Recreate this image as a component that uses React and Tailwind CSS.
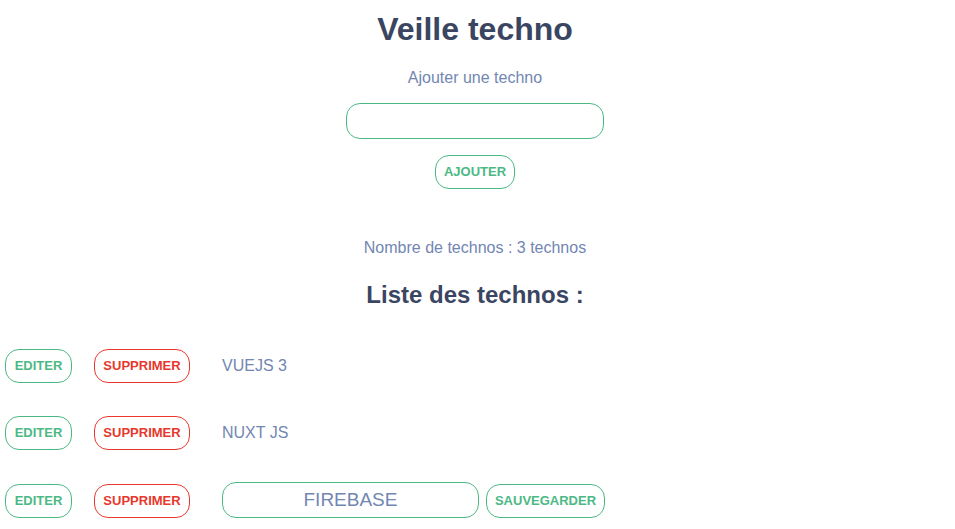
export default function App() {
  const font = { fontFamily: '"Liberation Sans", Arial, sans-serif' };
  const items = ["VUEJS 3", "NUXT JS"];
  const btnG = "h-[34px] rounded-[14px] border border-[#4cb985] text-[#4cb985] text-[13px] font-bold bg-white flex items-center justify-center";
  const btnR = "h-[34px] rounded-[14px] border border-[#e8372c] text-[#e8372c] text-[13px] font-bold bg-white flex items-center justify-center";
  return (
    <div className="w-[955px] h-[529px] bg-white overflow-hidden" style={font}>
      <div className="w-[950px] flex flex-col items-center">
        <h1 className="mt-[11px] text-[32px] leading-[37px] font-bold text-[#3a4562]">Veille techno</h1>
        <div className="mt-[21px] text-[16px] leading-[18px] text-[#7286b2]">Ajouter une techno</div>
        <div className="mt-[16px] w-[258px] h-[36px] rounded-[14px] border border-[#4cb985]"></div>
        <button className={btnG + " mt-[16px] w-[80px]"}>AJOUTER</button>
        <div className="mt-[50px] text-[16px] leading-[18px] text-[#7286b2]">Nombre de technos : 3 technos</div>
        <h2 className="mt-[24px] text-[24px] leading-[28px] font-bold text-[#3a4562]">Liste des technos :</h2>
      </div>
      <div className="mt-[40px] flex flex-col gap-[33px]">
        {items.map((t) => (
          <div key={t} className="flex items-center h-[34px]">
            <button className={btnG + " ml-[5px] w-[67px]"}>EDITER</button>
            <button className={btnR + " ml-[22px] w-[96px]"}>SUPPRIMER</button>
            <span className="ml-[32px] text-[16px] text-[#7286b2]">{t}</span>
          </div>
        ))}
      </div>
      <div className="mt-[32px] flex items-end h-[36px]">
        <button className={btnG + " ml-[5px] w-[67px]"}>EDITER</button>
        <button className={btnR + " ml-[22px] w-[96px]"}>SUPPRIMER</button>
        <div className="ml-[32px] w-[257px] h-[36px] rounded-[14px] border border-[#4cb985] flex items-center justify-center text-[19px] text-[#7286b2]">FIREBASE</div>
        <button className={btnG + " ml-[7px] w-[119px]"}>SAUVEGARDER</button>
      </div>
    </div>
  );
}
